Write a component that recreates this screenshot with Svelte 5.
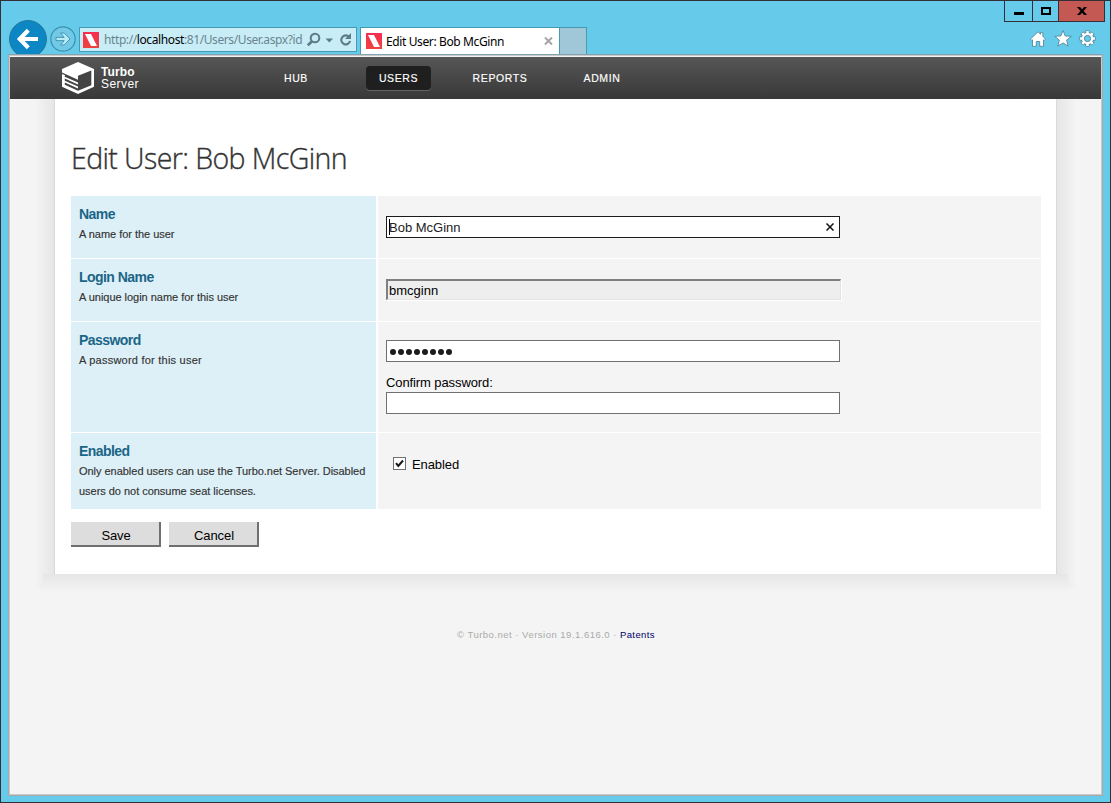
<script>
  const menu = [
    { label: 'HUB', width: 62 },
    { label: 'USERS', width: 65, active: true },
    { label: 'REPORTS', width: 80 },
    { label: 'ADMIN', width: 64 },
  ];
  let name = $state('Bob McGinn');
  let enabled = $state(true);
</script>

{#snippet favicon()}
  <svg class="favicon" width="16" height="16" viewBox="0 0 16 16">
    <defs>
      <linearGradient id="fav" x1="0" y1="0" x2="0" y2="1">
        <stop offset="0" stop-color="#f52d52" /><stop offset="1" stop-color="#ee443e" />
      </linearGradient>
    </defs>
    <rect width="16" height="16" fill="url(#fav)" />
    <path d="M2 2h6l6 12H8z" fill="#fff" />
  </svg>
{/snippet}

<div class="window">
  <div class="chrome">
    <div class="nav">
      <svg class="back" width="38" height="34" viewBox="0 0 38 34">
        <circle cx="19" cy="19" r="18.5" fill="#0c87c4" stroke="#27789b" />
        <path d="M10.500 19H29M19.300 10.300L10.800 19l8.500 8.700" fill="none" stroke="#fff" stroke-width="4.2" />
      </svg>
      <svg class="forward" width="26" height="26" viewBox="0 0 26 26">
        <circle cx="13" cy="13" r="12.2" fill="#70cae7" stroke="#3e8faa" stroke-width="1.2" />
        <path d="M6 11.400h8.200L10.600 7h3.600l5.800 6-5.800 6h-3.600l3.600-4.400H6z" fill="#b9ebf7" stroke="#3e8faa" stroke-width=".9" />
      </svg>
      <div class="address">
        {@render favicon()}
        <span class="url">http://<b>localhost</b>:81/Users/User.aspx?id</span>
        <svg class="tools" width="46" height="16" viewBox="0 0 46 16" fill="none" stroke="#5c7d87">
          <circle cx="8" cy="6" r="4.300" stroke-width="2.100" />
          <path d="M5 9.200L.8 13.300" stroke-width="2.700" />
          <path d="M18.500 6.500h7.500L22.250 10.500z" fill="#5c7d87" stroke="none" />
          <path d="M42 4.800A4.500 4.500 0 1 0 43.100 9" stroke-width="2.100" />
          <path d="M44 1v6h-6z" fill="#5c7d87" stroke="none" />
        </svg>
      </div>
      <div class="tab">
        {@render favicon()}
        <span class="tabtitle">Edit User: Bob McGinn</span>
        <svg width="9" height="8" viewBox="0 0 9 8"><path d="M1 .5l7 7M8 .5l-7 7" stroke="#a5a5a5" stroke-width="2" /></svg>
      </div>
      <div class="newtab"></div>
    </div>
    <div class="right">
      <div class="controls">
        <div class="ctl min"><svg width="10" height="3" viewBox="0 0 10 3"><path d="M0 0h10v3H0z" /></svg></div>
        <div class="ctl max"><svg width="10" height="8" viewBox="0 0 10 8"><path d="M1 1h8v6H1z" fill="none" stroke="#000" stroke-width="2" /></svg></div>
        <div class="ctl close"><svg width="10" height="8" viewBox="0 0 10 8"><path d="M0 0h3l2 2.300L7 0h3L6.500 4 10 8H7L5 5.700 3 8H0l3.500-4z" /></svg></div>
      </div>
      <div class="icons">
        <svg width="16" height="16" viewBox="0 0 16 16" fill="#fff" stroke="#477f93" stroke-width=".8">
          <path d="M8 .8l2.500 2.400V1.600h2.400v3.800l2.600 2.700-1.300 1.400-.7-.6V15.300H9.700v-4.800H6.300v4.800H2.500V8.900l-.7.6L.5 8.100z" />
        </svg>
        <svg width="18" height="17" viewBox="0 0 18 17" fill="#fff" stroke="#477f93" stroke-width=".8">
          <path d="M9 .5l2.200 5.500 6.100.3-4.700 3.800 1.600 6L9 12.900l-5.200 3.200 1.600-6L.7 6.300l6.100-.3z" />
        </svg>
        <svg width="17" height="17" viewBox="0 0 17 17">
          <g stroke="#477f93" stroke-width="4">
            <path d="M8.500.5v16M.5 8.500h16M2.800 2.800l11.400 11.400M14.200 2.800L2.800 14.200" />
          </g>
          <circle cx="8.500" cy="8.500" r="6.300" fill="#477f93" />
          <g stroke="#fff" stroke-width="2.600">
            <path d="M8.500 1v15M1 8.500h15M3.200 3.200l10.600 10.600M13.800 3.200L3.200 13.800" />
          </g>
          <circle cx="8.500" cy="8.500" r="5.700" fill="#fff" />
          <circle cx="8.500" cy="8.500" r="3.100" fill="#66cbea" stroke="#477f93" stroke-width=".9" />
        </svg>
      </div>
    </div>
  </div>

  <div class="viewport">
    <header>
      <div class="brand">
        <svg width="32" height="32" viewBox="0 0 32 32">
          <path d="M16 0L32 7V24.800L16 32 0 24.800V7z" fill="#fff" />
          <path d="M16 13.800L29.300 8.600V23.200L16 28.800z" fill="#444" />
          <path d="M0 10.600L16 17.700v2.900L2.800 14.800v-1.700L0 11.900zM2.800 16.600L16 22.400v2.200L2.800 18.800zM2.800 20.600L16 26.400v2.400L2.800 22.800z" fill="#444" />
        </svg>
        <div class="wordmark"><b>Turbo</b><span>Server</span></div>
      </div>
      <nav>
        {#each menu as m}
          <span class="item" class:active={m.active} style="width:{m.width}px">{m.label}</span>
        {/each}
      </nav>
    </header>

    <div class="body">
      <div class="shade left"></div>
      <main>
        <h1>Edit User: Bob McGinn</h1>
        <div class="form">
          <div class="lab r1"><h2>Name</h2><p>A name for the user</p></div>
          <div class="val r1">
            <div class="field focus"><i class="caret"></i><span>{name}</span>
              <svg width="8" height="8" viewBox="0 0 8 8"><path d="M.5.500l7 7M7.500.500l-7 7" stroke="#111" stroke-width="1.500" /></svg>
            </div>
          </div>
          <div class="lab r1"><h2>Login Name</h2><p>A unique login name for this user</p></div>
          <div class="val r1"><div class="field readonly"><span>bmcginn</span></div></div>
          <div class="lab r2"><h2>Password</h2><p class="wide">A password for this user</p></div>
          <div class="val r2">
            <div class="field dots">
              {#each Array(8) as _}<i class="dot"></i>{/each}
            </div>
            <div class="confirm">Confirm password:</div>
            <div class="field"></div>
          </div>
          <div class="lab r3"><h2>Enabled</h2><p>Only enabled users can use the Turbo.net Server. Disabled<br />users do not consume seat licenses.</p></div>
          <div class="val r3">
            <div class="check">
              <div class="box">{#if enabled}<svg width="11" height="11" viewBox="0 0 11 11"><path d="M2 5.200l2.300 2.700L9 2.500" fill="none" stroke="#1a1a1a" stroke-width="2" /></svg>{/if}</div>
              <span>Enabled</span>
            </div>
          </div>
        </div>
        <div class="buttons"><div class="btn">Save</div><div class="btn">Cancel</div></div>
      </main>
      <div class="shade rightside"></div>
    </div>
    <div class="bottomshade"></div>
    <footer><span>© Turbo.net · Version 19.1.616.0 ·</span><a href="#patents">Patents</a></footer>
  </div>
</div>

<style>
  :global(body) { margin: 0; overflow: hidden; }
  * { box-sizing: border-box; }
  svg { display: block; flex: none; }
  .window {
    width: 1111px; height: 803px; background: #66cbea; border: 1px solid #332f36;
    font-family: "Liberation Sans", Arial, sans-serif; color: #000;
    display: flex; flex-direction: column; overflow: hidden; white-space: nowrap;
  }
  .chrome { height: 53px; flex: none; display: flex; justify-content: space-between; }
  .nav { display: flex; align-items: flex-end; padding-left: 8px; }
  .forward { margin: 0 0 2px 3px; }
  .address {
    width: 278px; height: 25px; margin: 0 3px 2px; border: 1px solid #4899b3;
    background: #c8edf7; display: flex; align-items: center; padding-left: 3px;
    font: 12px "Noto Sans", sans-serif; color: #68858e;
  }
  .url { margin-left: 5px; width: 199px; letter-spacing: -.4px; line-height: 20px; }
  .url b { font-weight: 400; color: #000; }
  .tools { margin-left: 4px; }
  .tab {
    width: 200px; height: 27px; background: #fff; border: 1px solid #4899b3; border-bottom: 0;
    display: flex; align-items: center; padding: 0 6px 0 5px; font: 12px "Noto Sans", sans-serif;
  }
  .tabtitle { margin-left: 4px; flex: 1; letter-spacing: -.38px; line-height: 20px; padding-top: 1px; }
  .newtab { width: 27px; height: 27px; background: #9fc7d7; border: 1px solid #4899b3; border-left: 0; border-bottom: 0; }
  .right { width: 107px; padding-left: 1px; }
  .controls { display: flex; height: 21px; width: 101px; border: 1px solid #332f36; border-top: 0; }
  .ctl { display: flex; align-items: center; justify-content: center; border-right: 1px solid #332f36; }
  .min { width: 28px; padding-top: 4px; }
  .max { width: 26px; }
  .close { flex: 1; background: #c35952; border-right: 0; }
  .icons { display: flex; align-items: center; height: 17px; margin: 8px 0 0 26px; gap: 7.500px; }

  .viewport {
    width: 1095px; height: 742px; margin-left: 7px; flex: none; background: #f4f4f4;
    border: 1px solid #a9a9a9; border-top: 1px solid #81a3b2; box-shadow: inset 0 0 0 1px #c9c9c9;
    padding: 2px 1px 1px; overflow: hidden;
  }
  header {
    height: 42px; background: linear-gradient(#565656, #383838); display: flex; align-items: center; color: #fff;
  }
  .brand { display: flex; align-items: center; margin-left: 52px; width: 201px; }
  .wordmark { margin: 0 0 0 7px; font: 12px/12px "Liberation Sans", sans-serif; display: flex; flex-direction: column; }
  .wordmark b { letter-spacing: .1px; }
  .wordmark span { letter-spacing: .45px; }
  nav { display: flex; }
  .item { height: 24px; line-height: 24px; text-align: center; font-size: 10.500px; letter-spacing: .6px; margin-right: 40px; border-radius: 4px; -webkit-text-stroke: .15px #fff; }
  .item:first-child { margin-left: 2px; margin-right: 39px; }
  .item:nth-child(2) { margin-right: 29px; }
  .item.active { background: #1f1f1f; box-shadow: 0 1px #646464; }
  .item:nth-child(3) { margin-right: 30px; }

  .body { display: flex; height: 475px; align-items: flex-start; }
  .shade { width: 45px; height: 489px; background: linear-gradient(90deg, #f4f4f4 55%, #e5e5e5); }
  .rightside { background: linear-gradient(270deg, #f4f4f4 55%, #e5e5e5); }
  main { position: relative; width: 1001px; height: 475px; background: #fff; padding: 0 15px 0 16px; box-shadow: -1px 0 #d9d9d9, 1px 0 #d9d9d9; }
  h1 { margin: 0; padding-top: 38px; height: 97px; font: 300 28.500px/42px "Open Sans", sans-serif; color: #333; letter-spacing: -.6px; -webkit-text-stroke: .35px #333; }
  .form { display: grid; grid-template-columns: 305px 663px; gap: 1px 2px; }
  .lab { background: #ddf0f7; padding: 8px 0 0 8px; }
  .val { background: #f4f4f4; padding-left: 8px; }
  .r1 { height: 62px; }
  .r2 { height: 110px; }
  .r3 { height: 76px; }
  h2 { margin: 0; font: bold 14px/20px "Liberation Sans", sans-serif; letter-spacing: -.55px; color: #1b6587; }
  p { margin: 0; font-size: 11px; line-height: 20px; color: #333; letter-spacing: -.03px; -webkit-text-stroke: .15px #333; }
  .wide { letter-spacing: .23px; }
  .field { width: 454px; height: 22px; border: 1px solid #707070; background: #fff; display: flex; align-items: center; padding-left: 2px; font-size: 13px; }
  .focus { margin-top: 20px; border-color: #1c1c1c; color: #222; }
  .focus span { flex: 1; }
  .focus svg { margin-right: 5px; }
  .caret { width: 1px; height: 16px; background: #000; margin-right: -1px; }
  .readonly { margin-top: 20px; width: 455px; height: 21px; background: #eee; border: 2px solid; border-color: #808080 #e2e2e2 #e2e2e2 #808080; border-right-width: 1px; border-bottom-width: 1px; padding: 1px 0 0 1px; box-shadow: 1px 1px #fff; }
  .dots { margin-top: 18px; gap: 2px; padding: 2px 0 0 3px; }
  .dot { width: 6px; height: 6px; border-radius: 50%; background: #1c1c1c; }
  .confirm { font-size: 13px; line-height: 20px; margin: 11px 0 -1px; letter-spacing: -.1px; }
  .check { display: flex; align-items: center; margin: 21px 0 0 7px; font-size: 13px; line-height: 20px; letter-spacing: -.1px; }
  .check span { padding-top: 1px; }
  .box { width: 13px; height: 13px; border: 1px solid #707070; background: #fff; margin: 0 6px 2px 0; }
  .buttons { display: flex; gap: 8px; margin-top: 13px; }
  .btn { width: 90px; height: 25px; background: #ddd; border-right: 2px solid #707070; border-bottom: 2px solid #707070; text-align: center; font-size: 13px; line-height: 27px; padding-left: 2px; letter-spacing: -.1px; }
  .bottomshade { position: relative; height: 18px; margin: 0 33px; background: linear-gradient(#e6e6e6, #f4f4f4); }
  footer { display: flex; gap: 3px; font-size: 9.500px; line-height: 14px; margin: 36px 0 0 447px; color: #aaa; letter-spacing: .49px; }
  a { color: #000066; text-decoration: none; letter-spacing: .4px; }
</style>
